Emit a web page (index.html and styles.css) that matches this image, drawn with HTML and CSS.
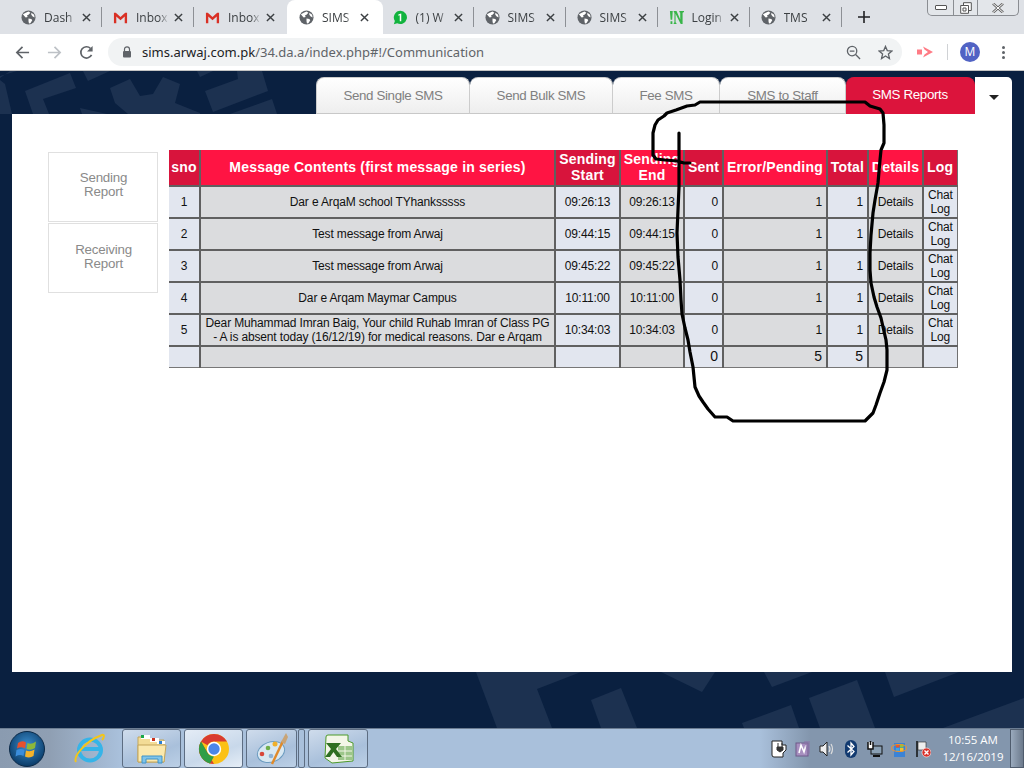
FILE: index.html
```html
<!DOCTYPE html>
<html lang="en">
<head>
<meta charset="utf-8">
<title>SIMS</title>
<link rel="stylesheet" href="styles.css">
</head>
<body>
<svg class="defs" width="0" height="0">
  <symbol id="globe" viewBox="0 0 16 16">
    <circle cx="8" cy="8" r="7.5" fill="#5f6368"/>
    <path d="M2 4.5 L5 3 L8 1.5 L10 3 L8 5 L6.5 5.5 L7 7.5 L5 8 L3.5 6.5Z M8 9 L11 9.5 L12 11 L10 14 L8.5 14.5 L8 12Z M11 3 L14 5 L14.5 8 L12.5 7 L11 5Z" fill="#fff"/>
  </symbol>
  <symbol id="gmail" viewBox="0 0 16 16">
    <path d="M1 3 H3 L8 7.5 L13 3 H15 V14 H12.5 V7 L8 11 L3.5 7 V14 H1Z" fill="#d93025"/>
  </symbol>
  <symbol id="close" viewBox="0 0 10 10">
    <path d="M1 1 L9 9 M9 1 L1 9" stroke="#3c4043" stroke-width="1.6" fill="none"/>
  </symbol>
</svg>

<div class="app">
  <header class="tabstrip">
    <div class="tab"><svg class="fav"><use href="#globe"/></svg><span class="tab-title">Dash</span><svg class="x"><use href="#close"/></svg></div>
    <div class="tab"><svg class="fav"><use href="#gmail"/></svg><span class="tab-title">Inbox</span><svg class="x"><use href="#close"/></svg></div>
    <div class="tab"><svg class="fav"><use href="#gmail"/></svg><span class="tab-title">Inbox</span><svg class="x"><use href="#close"/></svg></div>
    <div class="tab active"><svg class="fav"><use href="#globe"/></svg><span class="tab-title">SIMS</span><svg class="x"><use href="#close"/></svg></div>
    <div class="tab"><svg class="fav" viewBox="0 0 16 16"><path d="M8 .8a7.1 7.1 0 0 0-6 10.9L.9 15.2l3.6-1A7.1 7.1 0 1 0 8 .8Z" fill="#12b33e"/><path d="M8.8 3.8V12H7.2V5.6L5.7 6.2V4.9L8.6 3.8Z" fill="#fff"/></svg><span class="tab-title">(1) W</span><svg class="x"><use href="#close"/></svg></div>
    <div class="tab"><svg class="fav"><use href="#globe"/></svg><span class="tab-title">SIMS</span><svg class="x"><use href="#close"/></svg></div>
    <div class="tab"><svg class="fav"><use href="#globe"/></svg><span class="tab-title">SIMS</span><svg class="x"><use href="#close"/></svg></div>
    <div class="tab"><svg class="fav" viewBox="0 0 16 16"><path d="M1 1 H4 L3.4 10.5 H1.7Z M1.6 12 H3.6 V15 H1.6Z M5 1 H8 L12 10 V3 L11 2 V1 H16 V2 L14.5 3 V15 H12.5 L7 4 V13 L8 14 V15 H5 V14 L5.8 13 V3 L5 2Z" fill="#39b54a"/></svg><span class="tab-title">Login</span><svg class="x"><use href="#close"/></svg></div>
    <div class="tab"><svg class="fav"><use href="#globe"/></svg><span class="tab-title">TMS</span><svg class="x"><use href="#close"/></svg></div>
    <svg class="newtab" viewBox="0 0 12 12"><path d="M6 0 V12 M0 6 H12" stroke="#202124" stroke-width="1.6"/></svg>
  </header>

  <div class="winctl">
    <span class="wbtn wmin"><i class="wmin-bar"></i></span>
    <span class="wbtn wmax"><svg viewBox="0 0 12 12" width="12" height="12"><path d="M3.5 3 V.7 H11.3 V8.5 H9 M.7 3.5 H8.5 V11.3 H.7Z M3 6 H6 V9 H3Z" fill="#fff" stroke="#555" stroke-width="1"/></svg></span>
    <span class="wbtn wclose"><svg viewBox="0 0 12 10" width="12" height="10"><path d="M1 .5 L11 9.5 M11 .5 L1 9.5" stroke="#666" stroke-width="2.6"/><path d="M1 .5 L11 9.5 M11 .5 L1 9.5" stroke="#fff" stroke-width="1"/></svg></span>
  </div>

  <nav class="toolbar">
    <svg class="tool" viewBox="0 0 16 16"><path d="M15 8 H2 M8 2 L2 8 L8 14" stroke="#5f6368" stroke-width="1.8" fill="none"/></svg>
    <svg class="tool" viewBox="0 0 16 16"><path d="M1 8 H14 M8 2 L14 8 L8 14" stroke="#bdc1c6" stroke-width="1.8" fill="none"/></svg>
    <svg class="tool" viewBox="0 0 16 16"><path d="M13.4 10.5 A6 6 0 1 1 12.3 3.7" stroke="#5f6368" stroke-width="1.8" fill="none"/><path d="M14.5 1 V7 H8.5Z" fill="#5f6368"/></svg>
    <div class="omnibox">
      <svg class="lock" viewBox="0 0 10 12"><path d="M2.5 5 V3.3 a2.5 2.5 0 0 1 5 0 V5" stroke="#5f6368" stroke-width="1.2" fill="none"/><rect x="1" y="5" width="8" height="6.5" rx="1" fill="#5f6368"/></svg>
      <span class="url"><b>sims.arwaj.com.pk</b>/34.da.a/index.php#!/Communication</span>
      <svg class="omni-icon" viewBox="0 0 16 16"><circle cx="6.5" cy="6.5" r="5" stroke="#5f6368" stroke-width="1.4" fill="none"/><path d="M4 6.5 H9 M10.2 10.2 L15 15" stroke="#5f6368" stroke-width="1.4"/></svg>
      <svg class="omni-icon" viewBox="0 0 16 16"><path d="M8 1.5 L9.9 6 L14.8 6.4 L11.1 9.6 L12.2 14.4 L8 11.8 L3.8 14.4 L4.9 9.6 L1.2 6.4 L6.1 6Z" stroke="#5f6368" stroke-width="1.4" fill="none"/></svg>
    </div>
    <svg class="ext" viewBox="0 0 16 12"><rect x="0" y="3.5" width="5" height="5" fill="#ff7b85"/><path d="M6 .5 L16 6 L6 11.5 L7.5 8.5 L11 6 L7.5 3.5Z" fill="#ff7b85"/></svg>
    <i class="toolsep"></i>
    <span class="avatar">M</span>
    <span class="dots"><i></i><i></i><i></i></span>
  </nav>

  <main class="page">
    <svg class="wallpaper" viewBox="0 0 1024 768" width="1024" height="768">
      <g fill="#1c3150">
        <polygon points="0,78 10,71 17,71 0,76"/>
        <polygon points="0,80 5,84 12,114 0,114"/>
        <polygon points="25,91 70,73 76,88 43,99 49,114 33,114"/>
        <polygon points="83,71 110,71 88,81"/>
        <polygon points="110,88 130,79 140,96 153,94 163,77 180,84 175,103 200,113 200,114 150,114 128,114 115,103"/>
        <polygon points="80,108 107,114 82,114"/>
        <polygon points="197,71 213,71 200,77"/>
        <polygon points="205,91 238,79 237,71 262,71 268,91 213,112"/>
        <polygon points="230,114 272,99 277,114"/>
        <polygon points="476,672 581,672 537,689 552,728 497,728"/>
        <polygon points="591,700 621,688 637,728 601,728"/>
        <polygon points="661,672 715,672 702,692"/>
        <polygon points="764,672 812,672 772,687"/>
        <polygon points="742,723 791,705 799,728 744,728"/>
        <polygon points="809,698 857,680 875,728 820,728"/>
        <polygon points="885,672 959,672 894,697"/>
        <polygon points="943,728 1024,698 1024,728"/>
      </g>
    </svg>

    <div class="ptabs">
      <a class="ptab w1">Send Single SMS</a>
      <a class="ptab w2">Send Bulk SMS</a>
      <a class="ptab w3">Fee SMS</a>
      <a class="ptab w4">SMS to Staff</a>
      <a class="ptab ptab-on">SMS Reports</a>
      <a class="ptab ptab-more"><i class="caret"></i></a>
    </div>

    <section class="panel">
      <aside class="side">
        <a class="sidebtn">Sending<br>Report</a>
        <a class="sidebtn">Receiving<br>Report</a>
      </aside>
      <table class="report">
        <colgroup>
          <col class="c1"><col class="c2"><col class="c3"><col class="c4"><col class="c5"><col class="c6"><col class="c7"><col class="c8"><col class="c9">
        </colgroup>
        <thead>
          <tr>
            <th>sno</th><th>Message Contents (first message in series)</th><th>Sending<br>Start</th><th>Sending<br>End</th><th>Sent</th><th>Error/Pending</th><th>Total</th><th>Details</th><th>Log</th>
          </tr>
        </thead>
        <tbody>
          <tr><td>1</td><td>Dar e ArqaM school TYhanksssss</td><td>09:26:13</td><td>09:26:13</td><td class="num">0</td><td class="num">1</td><td class="num">1</td><td>Details</td><td>Chat<br>Log</td></tr>
          <tr><td>2</td><td>Test message from Arwaj</td><td>09:44:15</td><td>09:44:15</td><td class="num">0</td><td class="num">1</td><td class="num">1</td><td>Details</td><td>Chat<br>Log</td></tr>
          <tr><td>3</td><td>Test message from Arwaj</td><td>09:45:22</td><td>09:45:22</td><td class="num">0</td><td class="num">1</td><td class="num">1</td><td>Details</td><td>Chat<br>Log</td></tr>
          <tr><td>4</td><td>Dar e Arqam Maymar Campus</td><td>10:11:00</td><td>10:11:00</td><td class="num">0</td><td class="num">1</td><td class="num">1</td><td>Details</td><td>Chat<br>Log</td></tr>
          <tr><td>5</td><td>Dear Muhammad Imran Baig, Your child Ruhab Imran of Class PG<br>- A is absent today (16/12/19) for medical reasons. Dar e Arqam</td><td>10:34:03</td><td>10:34:03</td><td class="num">0</td><td class="num">1</td><td class="num">1</td><td>Details</td><td>Chat<br>Log</td></tr>
        </tbody>
        <tfoot>
          <tr><td></td><td></td><td></td><td></td><td class="num">0</td><td class="num">5</td><td class="num">5</td><td></td><td></td></tr>
        </tfoot>
      </table>
    </section>
  </main>

  <footer class="taskbar">
    <span class="orb"><svg viewBox="0 0 36 36" width="36" height="36"><defs><radialGradient id="orbg" cx="50%" cy="40%" r="60%"><stop offset="0" stop-color="#3b8fd0"/><stop offset="1" stop-color="#0a3a66"/></radialGradient></defs><circle cx="18" cy="18" r="17.5" fill="url(#orbg)" stroke="#0c2a48"/><path d="M9 12 Q13 9 17 11.5 L16 17.5 Q12 15 8 17.5Z" fill="#e6512d"/><path d="M18.5 12 Q22 14 27 10.5 L26 17 Q22 20 17.5 18Z" fill="#8cb83a"/><path d="M7.5 19 Q12 17 15.5 19 L14.5 25 Q11 23 6.5 25.5Z" fill="#3b8ddb"/><path d="M17 19.5 Q21 21.5 25.5 18.5 L24.5 25 Q20.5 27.5 16 25.5Z" fill="#f5b32a"/></svg></span>
    <span class="quick"><svg viewBox="0 0 32 32" width="32" height="32"><ellipse cx="17" cy="17" rx="11" ry="10.5" fill="none" stroke="#36b4e8" stroke-width="4"/><path d="M8 16 H27" stroke="#36b4e8" stroke-width="4"/><path d="M3 29 C0 24 12 8 29 2 C32 1 31 5 29 7" stroke="#f3c51b" stroke-width="2" fill="none"/></svg></span>
    <span class="tbtn tb-folder"><svg viewBox="0 0 32 32" width="32" height="32"><path d="M2 4 H13 L15 7 H28 V29 H2Z" fill="#f3dc96" stroke="#c3a55a"/><rect x="5" y="2" width="9" height="4" fill="#fff"/><rect x="5" y="2" width="3" height="3" fill="#19a84a"/><rect x="14" y="5" width="9" height="4" fill="#fff"/><rect x="16" y="5" width="3" height="3" fill="#c8321e"/><rect x="21" y="8" width="8" height="3" fill="#fff"/><rect x="23" y="8" width="3" height="3" fill="#2a7fd3"/><path d="M2 12 H30 L28 29 H2Z" fill="#fbe9ae" stroke="#c3a55a"/><path d="M6 30 V23 H26 V30 H22 V26 H10 V30Z" fill="#7fc4ea" stroke="#3f93c9"/></svg></span>
    <span class="tbtn tb-chrome"><svg viewBox="0 0 32 32" width="32" height="32"><circle cx="16" cy="16" r="15" fill="#fbc116"/><path d="M16 1 A15 15 0 0 1 29 8.500 L16 8.500 A7.500 7.500 0 0 0 9.500 12.250 L3 8.500 A15 15 0 0 1 16 1Z M3 8.500 L9.500 19.750 L16 31 A15 15 0 0 1 3 8.500Z" fill="#d93b30"/><path d="M3 8.500 L9.500 19.750 A7.500 7.500 0 0 0 16 23.500 L12 30.460 A15 15 0 0 1 3 8.500Z" fill="#2f9e46"/><circle cx="16" cy="16" r="7.200" fill="#fff"/><circle cx="16" cy="16" r="5.700" fill="#4a86e8"/></svg></span>
    <span class="tbtn tb-paint"><svg viewBox="0 0 32 32" width="32" height="32"><ellipse cx="15" cy="19" rx="14" ry="10" fill="#d8e8f2" stroke="#6c9cc0" transform="rotate(-20 15 19)"/><circle cx="6" cy="21" r="2.300" fill="#d8473a"/><circle cx="12" cy="15" r="2.300" fill="#6fae4a"/><circle cx="19" cy="11" r="2.500" fill="#f0b02a"/><circle cx="15" cy="23" r="2.300" fill="#8fb3d5"/><path d="M16 31 L27 8" stroke="#e08a2a" stroke-width="2.400"/><path d="M25 9 L30 0 L32 4 L29 11Z" fill="#c9a476"/></svg></span>
    <span class="tb-sliver"></span>
    <span class="tbtn tb-excel"><svg viewBox="0 0 32 32" width="32" height="32"><path d="M4 4 Q4 2 6 2 H26 V8 L31 10 V28 L10 30 L3 25Z" fill="#f3f6e8" stroke="#4d9a2a" stroke-width="1"/><path d="M16 13 H30 V27 H16Z" fill="#9cc68a"/><path d="M16 18 H30 M16 23 H30 M23 13 V27" stroke="#f3f6e8"/><path d="M4 10 H19 L14 16 L20 24 H15 L11.500 19 L8 24 H3 L9 16 L4 10Z" fill="#2f6f22"/></svg></span>
    <div class="tray">
      <svg class="tray-i" viewBox="0 0 16 18"><path d="M1 1 H11 V5 H15 V10 L12 13 V17 H3 Q1 17 1 15Z" fill="#fff" stroke="#222"/><path d="M7 3 V7 M11 3 V7 M6 7 H12 V10 L9 12 L6 10Z" fill="#333" stroke="#333"/></svg>
      <svg class="tray-i" viewBox="0 0 16 18"><rect x="1" y="3" width="12" height="13" fill="#a78fbf" stroke="#6e5a8a"/><path d="M4 13 L6 5 L9 12 L11 5" stroke="#fff" stroke-width="1.500" fill="none"/><path d="M9 1 H15 V13 L13 16" fill="#8c73a8" opacity=".6"/></svg>
      <svg class="tray-i" viewBox="0 0 16 18"><path d="M1 6 H4 L8 2 V16 L4 12 H1Z" fill="#eee" stroke="#222"/><path d="M10 6 Q12 9 10 12 M12 4 Q15 9 12 14" stroke="#ddd" stroke-width="1.200" fill="none"/></svg>
      <svg class="tray-i" viewBox="0 0 16 18"><rect x="2" y="0" width="12" height="18" rx="6" fill="#123a70"/><path d="M4.500 5.500 L11 11.500 L8 15 V3 L11 6.500 L4.500 12.500" stroke="#fff" stroke-width="1.300" fill="none"/></svg>
      <svg class="tray-i" viewBox="0 0 16 18"><rect x="4" y="6" width="11" height="8" fill="#8aa0b4" stroke="#111"/><path d="M1 2 V9 H6 V2 M3.500 1 V5" stroke="#111" stroke-width="1.500" fill="#fff"/><path d="M6 16 H13" stroke="#111" stroke-width="2"/></svg>
      <svg class="tray-i" viewBox="0 0 16 18"><rect x="3" y="3" width="11" height="14" fill="#3b83d6"/><path d="M5 4 H8.500 V7.500 H5Z" fill="#e8552d"/><path d="M9 4 H12.500 V7.500 H9Z" fill="#8cc63f"/><path d="M5 8 H8.500 V11.500 H5Z" fill="#3ba5e8"/><path d="M9 8 H12.500 V11.500 H9Z" fill="#f5c12a"/><ellipse cx="8" cy="8" rx="8" ry="3.500" fill="none" stroke="#f0912a"/></svg>
      <svg class="tray-i" viewBox="0 0 16 18"><path d="M2 1 V17" stroke="#111" stroke-width="1.500"/><path d="M3 2 H11 V10 H3Z" fill="#eee" stroke="#222" stroke-width=".6"/><circle cx="11.500" cy="12.500" r="4.500" fill="#d9302a" stroke="#fff" stroke-width=".6"/><path d="M9.500 10.500 L13.500 14.500 M13.500 10.500 L9.500 14.500" stroke="#fff" stroke-width="1.400"/></svg>
    </div>
    <div class="clock"><span>10:55 AM</span><span>12/16/2019</span></div>
    <span class="showdesk"></span>
  </footer>

  <svg class="scribble" viewBox="0 0 1024 768" width="1024" height="768">
    <path d="M690 163 L684 163 L677 161 L665 160 L656 159 L653 155 L653 133 L655 125 L658 120 L664 116 L667 113 L676 110 L687 106 L695 105 L700 102 L865 102 L870 106 L880 109 L883 113 L884 125 L884 143 L881 150 L880 160 L878 183 L875 200 L873 213 L871 235 L870 253 L870 270 L871 283 L874 297 L877 307 L881 318 L883 327 L886 340 L887 350 L887 370 L884 382 L880 393 L876 405 L873 413 L868 418 L865 421 L733 421 L727 417 L715 417 L708 409 L703 402 L699 396 L695 387 L694 377 L693 367 L690 352 L688 340 L685 328 L682 314 L681 300 L680 280 L678 257 L677 233 L678 210 L679 187 L679 133" fill="none" stroke="#000" stroke-width="3.200" stroke-linejoin="round" stroke-linecap="round"/>
  </svg>
</div>
</body>
</html>
```

FILE: styles.css
```css
* { box-sizing: border-box; }
html, body { margin: 0; padding: 0; }
body { width: 1024px; height: 768px; overflow: hidden; font-family: "Liberation Sans", Arial, sans-serif; }
.defs { position: absolute; }
.app { position: relative; width: 1024px; height: 768px; display: flex; flex-direction: column; overflow: hidden; background: #0a2040; }

/* browser tab strip */
.tabstrip { height: 34px; flex: none; display: flex; align-items: stretch; padding-left: 10px; background: #dee1e6; font-family: "Open Sans", "Liberation Sans", sans-serif; font-size: 12px; color: #3c4043; }
.tab { width: 92px; display: flex; align-items: center; padding: 0 0 0 11px; position: relative; }
.tab::after { content: ""; position: absolute; right: 0; top: 7px; height: 20px; width: 1px; background: #8d9095; }
.tab.active { background: #fff; border-radius: 8px 8px 0 0; width: 95.5px; margin-left: 1px; padding-left: 12px; margin-right: -1px; }
.tab.active::after, .tab:nth-child(3)::after { display: none; }
.fav { width: 15px; height: 15px; flex: none; }
.tab-title { width: 33px; margin-left: 8px; overflow: hidden; white-space: nowrap; -webkit-mask-image: linear-gradient(90deg, #000 70%, transparent); mask-image: linear-gradient(90deg, #000 70%, transparent); }
.x { width: 9px; height: 9px; margin-left: 5px; flex: none; }
.newtab { width: 12px; height: 12px; align-self: center; margin-left: 16px; }

.winctl { position: absolute; top: 0; left: 927px; width: 92px; height: 16px; display: flex; border: 1px solid #8a8d92; border-top: 0; border-radius: 0 0 5px 5px; background: #e3e6ea; }
.wbtn { display: flex; align-items: center; justify-content: center; border-right: 1px solid #8a8d92; }
.wmin { width: 26px; }
.wmax { width: 24px; }
.wclose { flex: 1; border-right: 0; }
.wmin-bar { width: 12px; height: 5px; border: 1px solid #555; border-radius: 1px; background: #fff; }

/* browser toolbar */
.toolbar { height: 37px; flex: none; display: flex; align-items: center; padding: 0 0 0 15px; background: #fff; border-bottom: 1px solid #c4c4c4; }
.tool { width: 15px; height: 15px; margin-right: 17px; flex: none; }
.omnibox { width: 794px; height: 28px; margin-left: -3px; display: flex; align-items: center; padding: 0 9px 0 14px; border-radius: 14px; background: #f1f3f4; }
.lock { width: 10px; height: 12px; flex: none; }
.url { margin-left: 10px; flex: 1; font-family: "Noto Sans", "Liberation Sans", sans-serif; font-size: 13px; color: #5f6368; white-space: nowrap; }
.url b { font-weight: 400; color: #202124; }
.omni-icon { width: 15px; height: 15px; margin-left: 17px; flex: none; }
.ext { width: 16px; height: 12px; margin-left: 15px; flex: none; }
.toolsep { width: 1px; height: 16px; margin-left: 14px; background: #d0d2d5; }
.avatar { width: 20px; height: 20px; margin-left: 12px; border-radius: 50%; background: #5163c4; color: #fff; font-size: 12px; line-height: 20px; text-align: center; font-family: "Open Sans", sans-serif; }
.dots { display: flex; flex-direction: column; gap: 2px; margin-left: 22px; }
.dots i { width: 3px; height: 3px; border-radius: 50%; background: #5f6368; }

/* page */
.page { position: relative; flex: 1; display: flex; flex-direction: column; padding: 6px 12px 56px; background: #0a2040; }
.wallpaper { position: absolute; left: 0; top: -71px; }
.ptabs { position: relative; display: flex; justify-content: flex-end; height: 37px; flex: none; }
.ptab { height: 37px; display: flex; align-items: center; justify-content: center; font-size: 13.33px; color: #808080; letter-spacing: -.35px; background: linear-gradient(#fff, #eee); border: 1px solid #ccc; border-bottom-color: #c8c8c8; border-left-width: 0; border-radius: 8px 8px 0 0; padding-bottom: 1px; }
.w1 { width: 154px; border-left-width: 1px; }
.w2 { width: 143px; }
.w3 { width: 107px; }
.w4 { width: 126px; }
.ptab-on { width: 129px; background: #dc143c; border-color: #dc143c; color: #fff; padding-bottom: 3px; }
.ptab-more { width: 37px; background: #fff; border: 0; border-radius: 0 5px 0 0; }
.caret { width: 0; height: 0; border: 5px solid transparent; border-top: 5px solid #222; border-bottom: 0; margin-top: 4px; }
.panel { position: relative; flex: 1; display: flex; align-items: flex-start; padding: 36px 0 0 36px; background: #fff; }
.side { width: 110px; margin: 2px 11px 0 0; display: flex; flex-direction: column; gap: 1px; flex: none; }
.sidebtn { height: 70px; padding: 18px 0 0 1px; text-align: center; border: 1px solid #e0e0e0; color: #8a8a8a; font-size: 13.33px; line-height: 14px; letter-spacing: -.2px; }
.sidebtn + .sidebtn { padding-top: 19px; }

/* report table */
.report { border-collapse: collapse; table-layout: fixed; width: 788px; font-size: 12px; color: #111; }
.c1 { width: 31px; } .c2 { width: 355px; } .c3 { width: 65px; } .c4 { width: 64px; } .c5 { width: 39px; } .c6 { width: 104px; } .c7 { width: 41px; } .c8 { width: 55px; } .c9 { width: 34px; }
.report th, .report td { border: 2px solid #606060; padding: 0; text-align: center; }
.report tr > :first-child { border-left: 0; }
.report tr > :last-child { border-right: 1px solid #707070; }
.report tr:first-child th { border-top: 0; }
.report th { height: 36px; padding-bottom: 1px; font-size: 14px; line-height: 16px; color: #fff; background: #ff1443; letter-spacing: .2px; }
.report th:nth-child(odd) { background: #d8143c; }
.report td { height: 32px; padding-top: 1px; line-height: 13.4px; letter-spacing: -.15px; background: #dbdcde; }
.report td:nth-child(odd) { background: #e2e6ef; }
.report td.num { text-align: right; padding-right: 4px; }
.report tfoot td { height: 21px; padding-top: 0; font-size: 14px; border-bottom: 1px solid #777; }

/* taskbar */
.taskbar { height: 40px; flex: none; display: flex; align-items: center; position: relative; background: linear-gradient(90deg, #8a9bb0 0, #8f9fb3 50px, #a9c0db 120px, #a9c0db 760px, #8396ad 810px, #8396ad 1024px); border-top: 1px solid #6c7d92; }
.orb { width: 36px; height: 36px; margin-left: 9px; flex: none; }
.quick { width: 32px; height: 32px; margin-left: 28px; flex: none; }
.tbtn { height: 39px; display: flex; align-items: center; justify-content: center; border: 1px solid #5d6d82; border-radius: 3px; background: linear-gradient(160deg, #cfdcec, #a9c0db 60%, #bcd0e6); flex: none; }
.tb-folder { width: 59px; margin-left: 17px; }
.tb-chrome { width: 59px; margin-left: 3px; background: linear-gradient(160deg, #e4ecf6, #c8d8ea 60%, #e6eef7); }
.tb-paint { width: 51px; margin-left: 3px; }
.tb-sliver { width: 7px; height: 39px; margin-left: 1px; border: 1px solid #5d6d82; border-radius: 2px; }
.tb-excel { width: 60px; margin-left: 3px; }
.tray { margin-left: auto; display: flex; gap: 8px; margin-right: 6px; }
.tray-i { width: 16px; height: 18px; flex: none; }
.clock { width: 72px; display: flex; flex-direction: column; align-items: center; gap: 1px; color: #fff; font-family: "Open Sans", "Liberation Sans", sans-serif; font-size: 11.5px; line-height: 16px; margin-right: 1px; }
.showdesk { width: 14px; height: 39px; margin-right: 0; background: linear-gradient(90deg, #9aaabd, #6c7a8c); border: 1px solid #4f5c6d; }

.scribble { position: absolute; left: 0; top: 0; pointer-events: none; }
```
